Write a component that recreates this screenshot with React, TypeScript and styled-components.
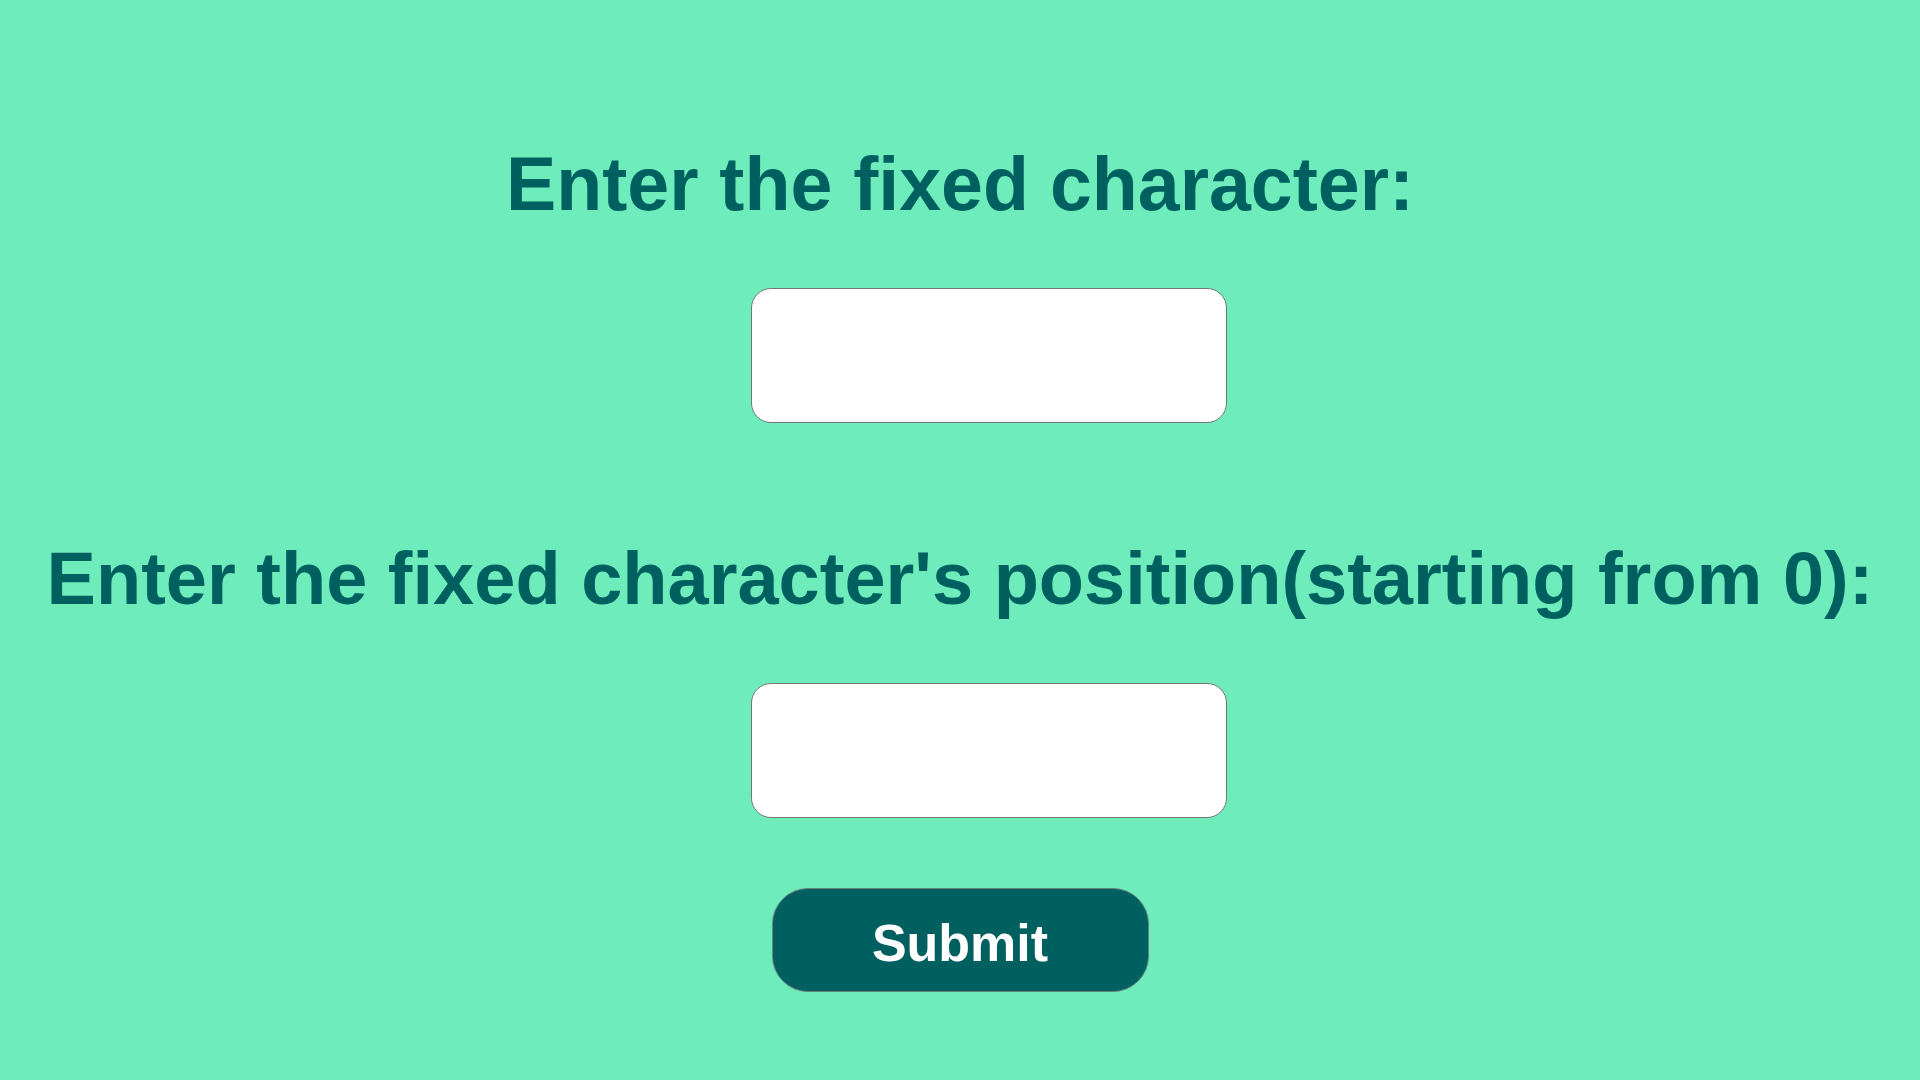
import React from "react";
import styled, { createGlobalStyle } from "styled-components";

const GlobalStyle = createGlobalStyle`
  html, body {
    margin: 0;
    padding: 0;
    background: #6eecbc;
  }
  body {
    font-family: "Liberation Sans", Arial, sans-serif;
  }
`;

const Page = styled.form`
  min-height: 100vh;
  box-sizing: border-box;
  padding-top: 141px;
  display: flex;
  flex-direction: column;
  align-items: center;
  background: #6eecbc;
`;

const Heading = styled.label<{ $gapTop: number; $size: number }>`
  display: block;
  margin-top: ${(p) => p.$gapTop}px;
  font-family: "Liberation Sans", Arial, sans-serif;
  font-weight: 700;
  font-size: ${(p) => p.$size}px;
  line-height: 86px;
  color: #006060;
  white-space: nowrap;
  text-align: center;
`;

const Field = styled.input`
  box-sizing: border-box;
  width: 476px;
  height: 135px;
  margin-top: 61px;
  margin-left: 58px;
  border: 1px solid #767676;
  border-radius: 20px;
  background: #ffffff;
  font-family: "Liberation Sans", Arial, sans-serif;
  font-size: 40px;
  padding: 0 20px;
  outline: none;
`;

const SubmitButton = styled.button`
  box-sizing: border-box;
  width: 377px;
  height: 104px;
  margin-top: 70px;
  padding-top: 6px;
  border: 1px solid #6b7f7b;
  border-radius: 36px;
  background: #006060;
  color: #ffffff;
  font-family: "Liberation Sans", Arial, sans-serif;
  font-weight: 700;
  font-size: 52px;
  cursor: pointer;
`;

export default function App() {
  return (
    <>
      <GlobalStyle />
      <Page onSubmit={(e) => e.preventDefault()}>
        <Heading $gapTop={0} $size={75.3} htmlFor="fixed-char">
          Enter the fixed character:
        </Heading>
        <Field id="fixed-char" type="text" />
        <Heading $gapTop={113} $size={74} htmlFor="fixed-pos">
          Enter the fixed character's position(starting from 0):
        </Heading>
        <Field id="fixed-pos" type="text" />
        <SubmitButton type="submit">Submit</SubmitButton>
      </Page>
    </>
  );
}
